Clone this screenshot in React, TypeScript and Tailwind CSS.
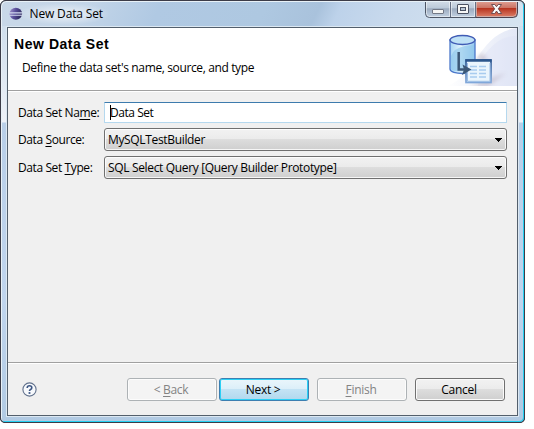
import type { ReactNode } from "react";

function TitleBar() {
  return (
    <div className="flex h-[25px] shrink-0 items-start bg-[linear-gradient(115deg,#c9d8e8_0%,#c3d5e8_16%,#b0c9e3_30%,#aec8e1_50%,#a9c2dc_60%,#bdd2ea_64%,#c9daed_75%,#d6e4f0_100%)] pl-[7px]">
      <svg className="mt-[5px] h-[14px] w-[14px] shrink-0" viewBox="0 0 15 15">
        <defs>
          <linearGradient id="orb" x1="0" x2="1" y1="0" y2="0.3">
            <stop offset="0" stopColor="#a99bd0" />
            <stop offset="0.5" stopColor="#5a4f9b" />
            <stop offset="1" stopColor="#2d285f" />
          </linearGradient>
        </defs>
        <ellipse cx="7.3" cy="7.2" rx="6.8" ry="6.4" fill="url(#orb)" />
        <path d="M0.3 6.300h14.200M0.300 8.800h14.200" stroke="#d3daf0" strokeWidth="1.1" />
      </svg>
      <div className="ml-[-6px] mt-[1px] h-[22px] w-[94px] bg-[radial-gradient(closest-side,rgba(255,255,255,0.42)_40%,rgba(255,255,255,0))] pl-[12.5px] text-[12px] leading-[22px] tracking-[-0.15px] whitespace-nowrap">
        New Data Set
      </div>
      <svg className="-mt-[2px] ml-auto mr-[5px] h-[18px] w-[93px] shrink-0" viewBox="0 0 93 18">
        <defs>
          <linearGradient id="cap" x2="0" y2="1">
            <stop offset="0" stopColor="#d6dfea" />
            <stop offset="0.45" stopColor="#bccad9" />
            <stop offset="0.5" stopColor="#9cabbf" />
            <stop offset="1" stopColor="#c4d3e4" />
          </linearGradient>
          <linearGradient id="close" x2="0" y2="1">
            <stop offset="0" stopColor="#e4a99d" />
            <stop offset="0.45" stopColor="#cc7565" />
            <stop offset="0.5" stopColor="#b83520" />
            <stop offset="1" stopColor="#dc806a" />
          </linearGradient>
        </defs>
        <path d="M.5 0V13.5Q.5 17.5 4.5 17.5H88.500Q92.500 17.500 92.500 13.500V0Z" fill="url(#cap)" stroke="#4d5666" />
        <path d="M51 0H92V13Q92 17 88 17H51Z" fill="url(#close)" stroke="#52272b" strokeWidth="0.8" />
        <path d="M1.500 1V13Q1.500 16.500 4.500 16.500H24.500V1M26.500 1V16.500H49.500V1M51.500 1V16.500H88Q91.500 16.500 91.500 13V1" fill="none" stroke="#fff" strokeOpacity="0.5" />
        <path d="M25.500 0V17M50.500 0V17" stroke="#667084" />
        <path d="M0 .5H93" stroke="#42434f" />
        <rect x="7.500" y="9.500" width="11" height="4" rx=".5" fill="#f5f5f4" stroke="#747a87" />
        <rect x="32.500" y="4.500" width="11" height="9" rx=".5" fill="#f7f7f6" stroke="#4b5263" />
        <rect x="35.500" y="7.500" width="5" height="3" fill="#b8c5d4" stroke="#4b5263" />
        <path d="M66.500 4.500h3.300l1.700 2.200 1.700-2.200h3.300l-3.200 4.300 3.300 4.700h-3.400l-1.700-2.500-1.700 2.500h-3.400l3.300-4.700Z" fill="#fafafa" stroke="#65454b" strokeWidth=".9" />
      </svg>
    </div>
  );
}

function Banner() {
  return (
    <svg className="h-[58px] w-[71px] shrink-0" viewBox="446 28 71 58">
      <defs>
        <linearGradient id="wash" x1="0" y1="0.65" x2="1" y2="0.65">
          <stop offset="0" stopColor="#fff" />
          <stop offset="1" stopColor="#e3e8f6" />
        </linearGradient>
        <linearGradient id="drum">
          <stop offset="0" stopColor="#a8d6f5" />
          <stop offset=".45" stopColor="#e2f3fc" />
          <stop offset="1" stopColor="#91c8ef" />
        </linearGradient>
        <linearGradient id="sheetEdge" x2="0" y2="1">
          <stop offset="0" stopColor="#2d568f" />
          <stop offset="1" stopColor="#80a7da" />
        </linearGradient>
        <filter id="soft"><feGaussianBlur stdDeviation="2" /></filter>
      </defs>
      <path d="M446 86C477 77 478 33 517 28V86Z" fill="url(#wash)" />
      <path d="M481 60Q497 35 517 36V86H478Z" fill="#dce2f4" opacity=".4" />
      <path d="M475 60L482 53L488 60ZM490 79L506 73L488 86H469Z" fill="#9b8b9d" opacity=".4" filter="url(#soft)" />
      <path d="M450 40V69C450 75 475 75 475 69V40Z" fill="url(#drum)" stroke="#4c78ca" strokeWidth="1.300" />
      <path d="M451 56Q454 48 465 46L474 45V61H466V71Q453 72 451 69Z" fill="#91c8eb" opacity=".65" />
      <ellipse cx="462.500" cy="40" rx="12.500" ry="4.500" fill="#bfe1f6" stroke="#405cb5" strokeWidth="1.300" />
      <rect x="466" y="60" width="25" height="22.500" fill="#eaf5fd" stroke="url(#sheetEdge)" strokeWidth="1.700" />
      <path d="M465.500 60.500H491.500" stroke="#2b568c" strokeWidth="2.500" />
      <path d="M467.500 63V81.300H490V63" fill="none" stroke="#9bbde5" />
      <path d="M470 66.500h7M479 66.500h7M470 70h7M479 70h7M470 73.500h7M479 73.500h7M470 77h7M479 77h7" stroke="#a8ccef" strokeWidth="1.700" />
      <path d="M458.700 52V69.500H464" fill="none" stroke="#3c5877" strokeWidth="2.500" />
      <path d="M462.500 64.500L471.500 69.500L462 75L464 69.500Z" fill="#3c5877" />
    </svg>
  );
}

function U({ children }: { children: ReactNode }) {
  return <span className="underline decoration-1 underline-offset-[2px]">{children}</span>;
}

function Row({ label, children }: { label: ReactNode; children: ReactNode }) {
  return (
    <div className="flex items-center">
      <div className="w-[86px] shrink-0 tracking-[-0.4px] whitespace-nowrap">{label}</div>
      {children}
    </div>
  );
}

function Combo({ children }: { children: ReactNode }) {
  return (
    <div className="flex h-[23px] w-[403px] items-center justify-between rounded-[3px] border border-[#707070] bg-[linear-gradient(#f2f2f2_0%,#ebebeb_48%,#dddddd_49%,#cfcfcf_100%)] pr-[4px] pl-[3px] shadow-[inset_0_0_0_1px_rgba(255,255,255,0.8)]">
      <span className="tracking-[-0.34px] whitespace-nowrap">{children}</span>
      <svg className="h-[4px] w-[7px]" viewBox="0 0 7 4" shapeRendering="crispEdges">
        <path d="M0 0H7V1H6V2H5V3H4V4H3V3H2V2H1V1H0Z" />
      </svg>
    </div>
  );
}

function Button({ kind, children }: { kind: "off" | "main" | "plain"; children: ReactNode }) {
  const look = {
    off: "border-[#adb2b5] bg-[#f4f4f4] text-[#838383] shadow-[inset_0_0_0_1px_#fcfcfc]",
    main: "border-[#3c7fb1] bg-[linear-gradient(#eaf6fb_0%,#dceff9_48%,#c4e3f4_50%,#b0d8ee_100%)] shadow-[inset_0_0_0_1px_#2bd0f5]",
    plain: "border-[#707070] bg-[linear-gradient(#f2f2f2_0%,#ebebeb_48%,#dddddd_49%,#cfcfcf_100%)] shadow-[inset_0_0_0_1px_#fafafa]",
  }[kind];
  return (
    <button className={`flex h-[23px] w-[90px] items-center justify-center rounded-[3px] border pr-[2px] text-[12px] tracking-[-0.3px] ${look}`}>
      <span>{children}</span>
    </button>
  );
}

export default function App() {
  return (
    <div className="h-[429px] w-[534px] overflow-hidden bg-white font-['Open_Sans','Noto_Sans',sans-serif] text-[12px] leading-[16px] text-black">
      <div className="h-[423px] w-[525px] rounded-t-[6px] rounded-b-[5px] bg-[#25313b]">
        <div className="flex h-full w-full flex-col rounded-t-[6px] rounded-b-[5px] border border-[#3c3c48] bg-[linear-gradient(#c9daea_0,#dce6f1_65px,#eef2f8_121px,#b9cfe8_122px,#c0d5ee_300px,#b1cae3_100%)] shadow-[inset_1px_1px_0_#e8f1f7,inset_-1px_-1px_0_#24d0f2]">
          <div className="mx-px mt-px flex flex-col overflow-hidden rounded-t-[5px]">
            <div className="-mb-px flex h-[25px] flex-col"><TitleBar /></div>
          </div>
          <div className="ml-[6px] mt-px flex h-[389px] w-[511px] flex-col border border-[#535f6c] bg-[#f0f0f0] shadow-[0_0_0_1px_#dce8f2]">
            <div className="flex h-[62px] shrink-0 justify-between bg-white">
              <div className="pl-[6px] pt-[8px]">
                <h1 className="font-['Liberation_Sans',sans-serif] text-[14px] leading-[16px] font-bold tracking-[0.55px]">New Data Set</h1>
                <p className="mt-[8px] pl-[8px] tracking-[-0.37px] whitespace-nowrap">Define the data set's name, source, and type</p>
              </div>
              <Banner />
            </div>
            <div className="h-[2px] shrink-0 border-t border-[#a0a0a0] bg-white" />
            <div className="flex grow flex-col gap-[5px] pt-[10px] pl-[10px]">
              <Row label={<>Data Set Na<U>m</U>e:</>}>
                <div className="flex h-[21px] w-[403px] items-center rounded-[1px] border border-[#b5d8ee] border-t-[#3d7bad] bg-white pl-[5px] tracking-[-0.45px]">
                  <span className="-mr-px h-[15px] w-px bg-black" />
                  Data Set
                </div>
              </Row>
              <Row label={<>Data <U>S</U>ource:</>}>
                <Combo>MySQLTestBuilder</Combo>
              </Row>
              <Row label={<>Data Set <U>T</U>ype:</>}>
                <Combo>SQL Select Query [Query Builder Prototype]</Combo>
              </Row>
            </div>
            <div className="h-[2px] shrink-0 border-t border-[#a0a0a0] bg-white" />
            <div className="flex h-[51px] shrink-0 items-center pl-[14px]">
              <svg className="mr-[90px] h-[15px] w-[15px]" viewBox="0 0 15 15">
                <circle cx="7.500" cy="7.500" r="6.600" fill="#f7f9fc" stroke="#61718c" strokeWidth="1.100" />
                <path d="M5.200 5.900Q5.200 3.700 7.500 3.700T9.800 5.700Q9.800 6.800 8.500 7.500Q7.500 8 7.500 9" fill="none" stroke="#3c5683" strokeWidth="1.600" />
                <path d="M6.600 10.100h1.800v1.800H6.600Z" fill="#3c5683" />
              </svg>
              <Button kind="off">&lt; <U>B</U>ack</Button>
              <div className="w-[2px]" />
              <Button kind="main">Next &gt;</Button>
              <div className="w-[8px]" />
              <Button kind="off"><U>F</U>inish</Button>
              <div className="w-[8px]" />
              <Button kind="plain">Cancel</Button>
            </div>
          </div>
        </div>
      </div>
    </div>
  );
}
